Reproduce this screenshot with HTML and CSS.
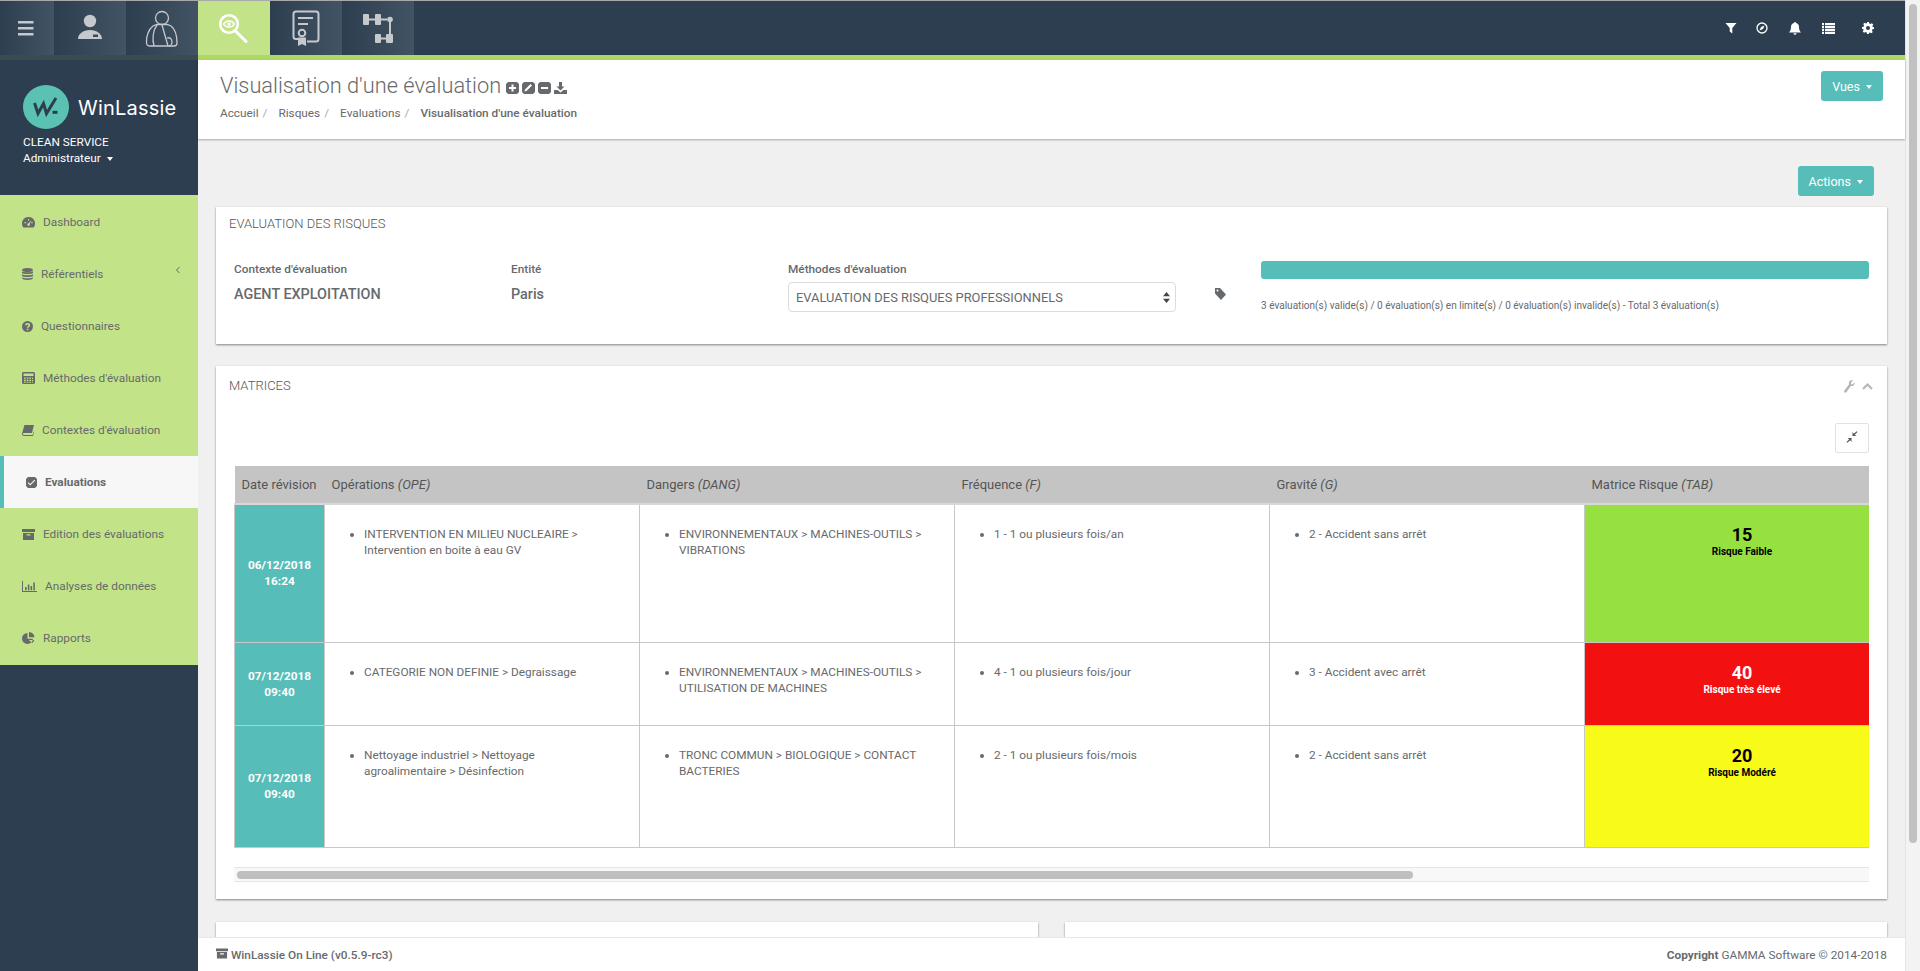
FILE: index.html
```html
<!DOCTYPE html>
<html lang="fr">
  <head>
    <meta charset="UTF-8" />
    <meta name="viewport" content="width=device-width, initial-scale=1.0" />
    <title>WinLassie</title>
    <link rel="stylesheet" href="styles.css">
  </head>
  <body>
    <div class="page">
      <header class="topbar">
        <div class="tabsRow">
          <a class="menuTab">
            <svg width="54" height="54" viewBox="0 0 54 54"><path fill="#c5c9ce" d="M18 20h15.500v2.600H18zM18 26h15.500v2.600H18zM18 32h15.500v2.600H18z"/></svg>
          </a>
          <a class="tab">
            <svg width="72" height="54" viewBox="0 0 72 54"><circle cx="36" cy="20" r="6.200" fill="#c5c9ce"/><path fill="#c5c9ce" fill-rule="evenodd" d="M24 38c0-5 5-9 12-9s12 4 12 9zM39 33.500v2.500h5v-2.500z"/></svg>
          </a>
          <a class="tab">
            <svg width="72" height="54" viewBox="0 0 72 54" fill="none" stroke="#c5c9ce" stroke-width="1.300"><circle cx="36" cy="17" r="6.500"/><path d="M24 45h24c2 0 3-1 3-3 0-7-2-14-6-17-2-1-3-1.500-4-1.500h-10c-1 0-2 .5-4 1.500-4 3-7 10-6.500 16.500 0 2 1.500 3.500 3.500 3.500z"/><path d="M31 24c-4 5-5 14-3 21M36 24l6 21M41 37c3-1 5 1 5 4s-2 4-3 4"/></svg>
          </a>
          <a class="tab active">
            <svg width="72" height="54" viewBox="0 0 72 54" fill="none" stroke="#fff"><circle cx="31" cy="23" r="8.800" stroke-width="2.600"/><path d="M37.500 30L48 40.500" stroke-width="3" stroke-linecap="round"/><path d="M25.500 23c3-4 8-4 11 0-3 4-8 4-11 0z" stroke-width="1.300"/><circle cx="31" cy="23" r="1.700" fill="#fff" stroke="none"/></svg>
          </a>
          <a class="tab">
            <svg width="72" height="54" viewBox="0 0 72 54" fill="none" stroke="#c5c9ce" stroke-width="2"><path d="M28 38h-2c-1.500 0-2.500-1-2.500-2.500V13c0-1.500 1-2.500 2.500-2.500h20c1.500 0 2.500 1 2.500 2.500v25c0 1.500-1 2.500-2.500 2.500h-9"/><path d="M28 17h15M28 23h10"/><circle cx="32" cy="32" r="3.300"/><path fill="#c5c9ce" stroke="none" d="M28 36.500h8V45l-4-2-4 2z"/></svg>
          </a>
          <a class="tab">
            <svg width="72" height="54" viewBox="0 0 72 54" fill="#c5c9ce"><rect x="21" y="13" width="6" height="11" rx="1"/><rect x="33" y="13" width="6" height="11" rx="1"/><path d="M27 17.500h6v2h-6zM39 17.500h6v2h-6zM47 19h2v14h-2z"/><circle cx="48" cy="18.500" r="2.800"/><rect x="33" y="33" width="6" height="9" rx="1"/><rect x="44" y="33" width="7" height="9" rx="1"/><path d="M39 36.500h5v2h-5z"/></svg>
          </a>
          <div class="rightIcons">
            <svg class="filterIco" width="12" height="12" viewBox="0 0 12 12"><path fill="#fff" d="M.5 1h11L7.300 6v5.500L4.700 9.500V6z"/></svg>
            <svg class="compassIco" width="12" height="12" viewBox="0 0 12 12"><circle cx="6" cy="6" r="5" fill="none" stroke="#fff" stroke-width="1.300"/><path fill="#fff" d="M8.600 3.400L7 7 3.400 8.600 5 5z"/></svg>
            <svg class="bellIco" width="12" height="13" viewBox="0 0 12 13"><path fill="#fff" d="M6 0a1 1 0 0 1 1 1c2 .4 3 2 3 4 0 3 .8 4 2 5.500H0C1.200 9 2 8 2 5c0-2 1-3.600 3-4a1 1 0 0 1 1-1zM4.500 11.200h3a1.500 1.500 0 0 1-3 0z"/></svg>
            <svg class="listIco" width="13" height="11" viewBox="0 0 13 11"><path fill="#fff" d="M0 0h2v2.200H0zM3 0h10v2.200H3zM0 3h2v2.200H0zM3 3h10v2.200H3zM0 6h2v2.200H0zM3 6h10v2.200H3zM0 9h2v2H0zM3 9h10v2H3z"/></svg>
            <svg class="gearIco" width="12" height="12" viewBox="0 0 12 12"><path fill="#fff" fill-rule="evenodd" d="M5 0h2l.3 1.600 1.200.5L9.900 1.200l1.400 1.400-.9 1.400.5 1.200L12 5v2l-1.600.3-.5 1.200.9 1.400-1.400 1.400-1.400-.9-1.200.5L7 12H5l-.3-1.600-1.200-.5-1.400.9L.7 9.400l.9-1.400-.5-1.200L0 7V5l1.600-.3.5-1.200-.9-1.400L2.600.7 4 1.600l1.200-.5zM6 4a2 2 0 1 0 0 4 2 2 0 0 0 0-4z"/></svg>
          </div>
        </div>
        <div class="strip"></div>
      </header>

      <div class="pageScroll"><div class="pageThumb"></div></div>

      <aside class="sidebar">
        <div class="profile">
          <div class="logo">
            <svg width="46" height="44" viewBox="0 0 46 44"><ellipse cx="23" cy="22" rx="23" ry="22" fill="#5bc2b3"/><path fill="none" stroke="#2d3e50" stroke-width="3" d="M11.500 18l3.500 10.500 5.500-10 3 10L33 13"/><rect x="29.500" y="25.800" width="5" height="3" fill="#2d3e50"/></svg>
            <span>WinLassie</span>
          </div>
          <div class="company">CLEAN SERVICE</div>
          <div class="role">Administrateur <i class="caret"></i></div>
        </div>
        <nav class="mainNav">
          <a><svg width="13" height="11" viewBox="0 0 13 11"><path fill="#676a6c" fill-rule="evenodd" d="M6.500 0a6.500 6.500 0 0 1 5.600 9.800l-.4.700H1.300l-.4-.7A6.500 6.500 0 0 1 6.500 0zM6 2v1.500h1V2zM2.500 5v1.300h1.400V5zm6.800-2.200L6.700 6.300a1.300 1.300 0 1 0 1 .6zM9.300 5v1.300h1.300V5z"/></svg>Dashboard</a>
          <a><svg width="11" height="12" viewBox="0 0 11 12"><ellipse cx="5.500" cy="2" rx="5.500" ry="2" fill="#676a6c"/><path fill="#676a6c" d="M0 3.200c1.500 1.400 9.500 1.400 11 0V5c-1.500 1.400-9.500 1.400-11 0zM0 6.200c1.500 1.400 9.500 1.400 11 0V8c-1.500 1.400-9.500 1.400-11 0zM0 9.200c1.500 1.400 9.500 1.400 11 0V10c0 2.600-11 2.600-11 0z"/></svg>Référentiels<svg class="navChevron" width="6" height="8" viewBox="0 0 6 8"><path fill="none" stroke="#676a6c" d="M4.500 1L1.500 4l3 3"/></svg></a>
          <a><svg width="11" height="11" viewBox="0 0 11 11"><circle cx="5.500" cy="5.500" r="5.500" fill="#676a6c"/><path fill="none" stroke="#c2e388" stroke-width="1.500" d="M3.800 4.300c0-2.200 3.600-2.200 3.600 0 0 1.300-1.800 1.300-1.800 2.500"/><path fill="#c2e388" d="M4.800 7.700h1.600v1.500H4.800z"/></svg>Questionnaires</a>
          <a><svg width="13" height="12" viewBox="0 0 13 12"><path fill="#676a6c" fill-rule="evenodd" d="M1 0h11l1 1v10l-1 1H1l-1-1V1zM1.500 1.500v2.500h10V1.500zM2 5.500v1.300h1.800V5.500zM4.700 5.500v1.300h1.700V5.500zM7.300 5.500v1.300H9V5.500zM10 5.500v1.300h1V5.500zM2 7.800v1.200h1.800V7.800zM4.700 7.800v1.200h1.700V7.800zM7.300 7.800v1.200H9V7.800zM10 7.800v1.200h1V7.800zM2 9.800v.9h1.800v-.9zM4.700 9.800v.9h1.700v-.9zM7.300 9.800v.9H9v-.9zM10 9.800v.9h1v-.9z"/></svg>Méthodes d'évaluation</a>
          <a><svg width="12" height="11" viewBox="0 0 12 11"><path fill="#676a6c" d="M2.500 0H12l-.3 1L10 8H2c-.6 0-1 .4-1 1s.4 1 1 1h8.600l1-3.500.4.500-1 4H2c-1.200 0-2-.8-2-2 0-.6.200-1.200.3-1.500z"/></svg>Contextes d'évaluation</a>
          <a class="current"><svg width="11" height="11" viewBox="0 0 11 11"><path fill="#676a6c" fill-rule="evenodd" d="M2 0h7l2 2v7l-2 2H2L0 9V2zM2.500 5.200L1.700 6l2.500 2.500 5-5-.8-.8-4.200 4.200z"/></svg>Evaluations</a>
          <a><svg width="13" height="11" viewBox="0 0 13 11"><path fill="#676a6c" fill-rule="evenodd" d="M0 0h13v3H0zM1 4h11v7H1zM4.500 5.300v1.200h4V5.300z"/></svg>Edition des évaluations</a>
          <a><svg width="15" height="11" viewBox="0 0 15 11"><path fill="#676a6c" d="M0 0h1v10h14v1H0zM3 6h1.600v3.300H3zM5.800 3.500h1.600v5.800H5.800zM8.500 5h1.600v4.300H8.500zM11.300 1.500h1.600v7.800h-1.600z"/></svg>Analyses de données</a>
          <a><svg width="13" height="12" viewBox="0 0 13 12"><path fill="#676a6c" d="M5.500 1a5.500 5.500 0 1 0 5.500 5.700H5.500zM7 0v5.200h5.500A5.500 5.500 0 0 0 7 0zM6.800 8h5.400a5.500 5.500 0 0 1-2 3z"/></svg>Rapports</a>
        </nav>
      </aside>

      <main class="mainCol">
        <section class="pageHead">
          <div>
            <h1>Visualisation d'une évaluation
              <span class="titleIcons">
                <svg width="13" height="12" viewBox="0 0 13 12"><path fill="#676a6c" fill-rule="evenodd" d="M2 0h9l2 2v8l-2 2H2L0 10V2zM5.500 2.500V5H3v2h2.500v2.500h2V7H10V5H7.500V2.500z"/></svg>
                <svg width="13" height="12" viewBox="0 0 13 12"><path fill="#676a6c" fill-rule="evenodd" d="M2 0h9l2 2v8l-2 2H2L0 10V2zM8.500 2L3 7.500 2.500 9.500 4.500 9 10 3.500z"/></svg>
                <svg width="13" height="12" viewBox="0 0 13 12"><path fill="#676a6c" fill-rule="evenodd" d="M2 0h9l2 2v8l-2 2H2L0 10V2zM3 5v2h7V5z"/></svg>
                <svg width="13" height="12" viewBox="0 0 13 12"><path fill="#676a6c" d="M5 0h3v4.500h2.500L6.500 8.500l-4-4H5zM0 8h3.500l3 2.500 3-2.500H13v4H0z"/></svg>
              </span>
            </h1>
            <ol class="breadcrumb">
              <li>Accueil</li>
              <li>Risques</li>
              <li>Evaluations</li>
              <li class="here">Visualisation d'une évaluation</li>
            </ol>
          </div>
          <button class="tealBtn">Vues <i class="caret"></i></button>
        </section>

        <div class="content">
          <div class="actionsRow">
            <button class="tealBtn">Actions <i class="caret"></i></button>
          </div>

          <section class="card riskCard">
            <div class="cardTitle">EVALUATION DES RISQUES</div>
            <div class="riskGrid">
              <div>
                <label>Contexte d'évaluation</label>
                <div class="bigValue">AGENT EXPLOITATION</div>
              </div>
              <div>
                <label>Entité</label>
                <div class="bigValue">Paris</div>
              </div>
              <div>
                <label>Méthodes d'évaluation</label>
                <div class="selectBox">
                  <span>EVALUATION DES RISQUES PROFESSIONNELS</span>
                  <svg width="7" height="11" viewBox="0 0 7 11"><path fill="#444" d="M3.500 0L7 4.300H0zM3.500 11L0 6.700h7z"/></svg>
                </div>
              </div>
              <div class="tagCell">
                <svg width="11" height="12" viewBox="0 0 11 12"><path fill="#676a6c" d="M0 0h5l6 6.500L6 12 0 5.500z"/><circle cx="2.500" cy="2.500" r="1" fill="#fff"/></svg>
              </div>
              <div>
                <div class="progress"></div>
                <div class="progressText">3 évaluation(s) valide(s) / 0 évaluation(s) en limite(s) / 0 évaluation(s) invalide(s) - Total 3 évaluation(s)</div>
              </div>
            </div>
          </section>

          <section class="card matrixCard">
            <div class="cardTitle">MATRICES
              <span class="cardTools">
                <svg width="11" height="13" viewBox="0 0 11 13"><path fill="#b5b5b5" d="M10.500 2.500L8.500 4.500 7 4V2.500L9 .5C7.500-.2 5.500.5 5 2c-.2.800-.1 1.500.1 2.200L.4 10.500c-.5.700-.4 1.500.2 2s1.300.3 1.800-.2L6.800 6c1 .2 2 .1 2.800-.6 1-.8 1.300-2 .9-2.900z"/></svg>
                <svg width="11" height="7" viewBox="0 0 11 7"><path fill="none" stroke="#b5b5b5" stroke-width="2" d="M1 6l4.500-4.500L10 6"/></svg>
              </span>
            </div>
            <div class="expandRow">
              <button class="expandBtn">
                <svg width="12" height="12" viewBox="0 0 12 12"><path fill="#555" d="M11.500 1L8.700 3.800 10.500 5H6.500V1l1.300 1.800L10.700.2zM.5 11l2.800-2.800L1.500 7h4v4L4.200 9.200 1.300 11.800z"/></svg>
              </button>
            </div>
            <div class="tableClip">
              <table class="matrix">
                <colgroup>
                  <col class="colDate"><col class="colWide"><col class="colWide"><col class="colWide"><col class="colWide"><col class="colWide"><col class="colRest">
                </colgroup>
                <thead>
                  <tr>
                    <th>Date révision</th>
                    <th>Opérations <em>(OPE)</em></th>
                    <th>Dangers <em>(DANG)</em></th>
                    <th>Fréquence <em>(F)</em></th>
                    <th>Gravité <em>(G)</em></th>
                    <th>Matrice Risque <em>(TAB)</em></th>
                    <th></th>
                  </tr>
                </thead>
                <tbody>
                  <tr class="rowA">
                    <td class="dateCell">06/12/2018<br>16:24</td>
                    <td><ul><li>INTERVENTION EN MILIEU NUCLEAIRE &gt; Intervention en boite à eau GV</li></ul></td>
                    <td><ul><li>ENVIRONNEMENTAUX &gt; MACHINES-OUTILS &gt; VIBRATIONS</li></ul></td>
                    <td><ul><li>1 - 1 ou plusieurs fois/an</li></ul></td>
                    <td><ul><li>2 - Accident sans arrêt</li></ul></td>
                    <td class="riskCell low"><b>15</b><span>Risque Faible</span></td>
                    <td></td>
                  </tr>
                  <tr class="rowB">
                    <td class="dateCell">07/12/2018<br>09:40</td>
                    <td><ul><li>CATEGORIE NON DEFINIE &gt; Degraissage</li></ul></td>
                    <td><ul><li>ENVIRONNEMENTAUX &gt; MACHINES-OUTILS &gt; UTILISATION DE MACHINES</li></ul></td>
                    <td><ul><li>4 - 1 ou plusieurs fois/jour</li></ul></td>
                    <td><ul><li>3 - Accident avec arrêt</li></ul></td>
                    <td class="riskCell high"><b>40</b><span>Risque très élevé</span></td>
                    <td></td>
                  </tr>
                  <tr class="rowC">
                    <td class="dateCell">07/12/2018<br>09:40</td>
                    <td><ul><li>Nettoyage industriel &gt; Nettoyage agroalimentaire &gt; Désinfection</li></ul></td>
                    <td><ul><li>TRONC COMMUN &gt; BIOLOGIQUE &gt; CONTACT BACTERIES</li></ul></td>
                    <td><ul><li>2 - 1 ou plusieurs fois/mois</li></ul></td>
                    <td><ul><li>2 - Accident sans arrêt</li></ul></td>
                    <td class="riskCell mid"><b>20</b><span>Risque Modéré</span></td>
                    <td></td>
                  </tr>
                </tbody>
              </table>
            </div>
            <div class="tableBar"><div class="tableThumb"></div></div>
          </section>

          <div class="lowerCards">
            <section class="card"></section>
            <section class="card"></section>
          </div>
        </div>

        <footer class="footer">
          <div class="footLeft">
            <svg width="12" height="11" viewBox="0 0 13 11"><path fill="#676a6c" fill-rule="evenodd" d="M0 0h13v3H0zM1 4h11v7H1zM4.500 5.300v1.200h4V5.300z"/></svg>
            WinLassie On Line (v0.5.9-rc3)
          </div>
          <div><strong>Copyright</strong> GAMMA Software © 2014-2018</div>
        </footer>
      </main>
    </div>
  </body>
</html>
```

FILE: styles.css
```css
* {
  box-sizing: border-box;
}
html,
body {
  margin: 0;
  height: 100%;
  overflow: hidden;
}
body {
  font-family: Roboto, "Liberation Sans", sans-serif;
  font-size: 11.8px;
  color: #676a6c;
}
.page {
  height: 100vh;
  overflow: hidden;
  display: grid;
  grid-template-columns: 198px 1fr 15px;
  grid-template-rows: 60px 1fr;
  background-color: #f0f0f0;
}

/* top bar */
.topbar {
  grid-column: 1 / 3;
  background-color: #2d3e50;
  border-top: 1px solid #a9a9a9;
}
.tabsRow {
  height: 54px;
  display: flex;
}
.menuTab,
.tab {
  display: block;
  height: 54px;
  background-image: linear-gradient(to right, #2d3e50, #425363);
}
.menuTab {
  width: 54px;
}
.tab {
  width: 72px;
}
.tab.active {
  background-image: none;
  background-color: #c2e388;
}
.rightIcons {
  flex: 1;
  display: flex;
  align-items: center;
  justify-content: flex-end;
  padding-right: 31px;
}
.filterIco {
  margin-right: 19px;
}
.compassIco {
  margin-right: 21px;
}
.bellIco {
  margin-right: 21px;
}
.listIco {
  margin-right: 27px;
}
.strip {
  height: 5px;
  background-image: linear-gradient(to right, #3a4c50 198px, #aed767 198px);
}

/* page scrollbar, drawn */
.pageScroll {
  grid-column: 3;
  grid-row: 1 / 3;
  background-color: #f3f3f3;
  border-left: 1px solid #e4e4e4;
  padding: 4px 3px 0 3px;
}
.pageThumb {
  height: 839px;
  border-radius: 4px;
  background-color: #c1c1c1;
}

/* sidebar */
.sidebar {
  grid-column: 1;
  background-color: #2d3e50;
}
.profile {
  height: 135px;
  padding: 25px 0 0 23px;
  color: #fff;
}
.logo {
  display: flex;
  align-items: center;
  gap: 9px;
  font-family: Inter, "Noto Sans", sans-serif;
  font-size: 20px;
  letter-spacing: 0.2px;
  margin-bottom: 5px;
}
.logo span {
  padding-top: 1px;
}
.company,
.role {
  line-height: 16px;
}
.caret {
  display: inline-block;
  margin-left: 3px;
  vertical-align: middle;
  border-top: 4px solid currentColor;
  border-left: 3.5px solid transparent;
  border-right: 3.5px solid transparent;
}
.mainNav {
  background-color: #c2e388;
  padding: 1px 0;
}
.mainNav a {
  height: 52px;
  display: flex;
  align-items: center;
  gap: 8px;
  padding-left: 22px;
  position: relative;
}
.mainNav a.current {
  background-color: #f7f7f7;
  border-left: 4px solid #57bdb8;
  font-weight: 700;
}
.navChevron {
  position: absolute;
  top: 18px;
  right: 17px;
}

/* main column */
.mainCol {
  grid-column: 2;
  min-width: 0;
  min-height: 0;
  height: 911px;
  display: flex;
  flex-direction: column;
}
.pageHead {
  height: 79px;
  flex: none;
  background-color: #fff;
  box-shadow: 0 1px 2px rgba(0, 0, 0, 0.3);
  padding: 0 22px;
  display: flex;
  justify-content: space-between;
  align-items: flex-start;
  position: relative;
}
.pageHead h1 {
  margin: 12px 0 0;
  font-size: 21.8px;
  line-height: 28px;
  font-weight: 300;
  white-space: nowrap;
}
.titleIcons {
  display: inline-flex;
  gap: 3px;
  margin-left: -1px;
  vertical-align: -1px;
}
.breadcrumb {
  list-style: none;
  margin: 5px 0 0;
  padding: 0;
  display: flex;
  line-height: 16px;
}
.breadcrumb li + li::before {
  content: "/";
  margin: 0 11px 0 4px;
  color: #aaa;
}
.breadcrumb .here {
  font-weight: 500;
}
.breadcrumb .here::before {
  font-weight: 400;
}
.tealBtn {
  height: 30px;
  padding: 0 11px;
  border: 0;
  border-radius: 3px;
  background-color: #57bdb8;
  color: #fff;
  font-family: inherit;
  font-size: 12.5px;
}
.pageHead .tealBtn {
  margin-top: 11px;
}
.content {
  flex: 1;
  min-height: 0;
  overflow: hidden;
  padding: 27px 18px 0;
}
.actionsRow {
  display: flex;
  justify-content: flex-end;
  padding-right: 13px;
  margin-bottom: 11px;
}
.card {
  background-color: #fff;
  box-shadow: 0 1px 2px rgba(0, 0, 0, 0.45);
}
.cardTitle {
  height: 32px;
  padding: 9px 13px 0;
  font-size: 13px;
  line-height: 16px;
  font-weight: 300;
  color: #555;
  position: relative;
}
.riskCard {
  height: 137px;
  margin-bottom: 22px;
}
.riskGrid {
  padding: 22px 18px 0;
  display: grid;
  grid-template-columns: 277px 277px 388px 85px 1fr;
}
.riskGrid label {
  display: block;
  font-weight: 500;
  line-height: 16px;
}
.bigValue {
  margin-top: 8px;
  font-size: 14.4px;
  line-height: 20px;
  font-weight: 500;
}
.selectBox {
  margin-top: 5px;
  height: 30px;
  border: 1px solid #dcdcdc;
  border-radius: 4px;
  padding: 1px 5px 0 7px;
  display: flex;
  align-items: center;
  justify-content: space-between;
  font-size: 12.9px;
}
.tagCell {
  padding: 27px 0 0 39px;
}
.progress {
  height: 18px;
  border-radius: 3px;
  background-color: #57bdb8;
}
.progressText {
  margin-top: 19px;
  font-size: 10.06px;
  line-height: 16px;
}
.matrixCard {
  height: 533px;
  margin-bottom: 23px;
  position: relative;
}
.matrixCard .cardTitle {
  padding-top: 12px;
}
.cardTools {
  position: absolute;
  top: 14px;
  right: 14px;
  display: flex;
  align-items: center;
  gap: 7px;
}
.expandRow {
  display: flex;
  justify-content: flex-end;
  padding: 25px 18px 13px;
}
.expandBtn {
  width: 34px;
  height: 30px;
  padding: 0;
  background-color: #fff;
  border: 1px solid #e2e2e2;
  border-radius: 2px;
}
.tableClip {
  margin: 0 18px 19px;
  overflow: hidden;
}
.tableBar {
  margin: 0 18px;
  height: 15px;
  background-color: #f8f8f8;
  border-top: 1px solid #e6e6e6;
  border-bottom: 1px solid #e6e6e6;
  padding: 3px 0 0 3px;
}
.tableThumb {
  width: 1176px;
  height: 8px;
  border-radius: 4px;
  background-color: #bfbfbf;
}
.matrix {
  width: 2270px;
  table-layout: fixed;
  border-collapse: collapse;
}
.colDate {
  width: 90px;
}
.colWide {
  width: 315px;
}
.matrix th {
  height: 38px;
  background-color: #c4c4c4;
  padding: 0 7px;
  text-align: left;
  font-size: 13px;
  font-weight: 400;
  color: #555;
  white-space: nowrap;
  border-bottom: 2px solid #d8d8d8;
}
.matrix td {
  padding: 0;
  vertical-align: top;
  border: 1px solid #c8c8c8;
  line-height: 16px;
  background-color: #fff;
}
.matrix ul {
  margin: 0;
  padding: 21px 22px 0 39px;
}
.rowA {
  height: 138px;
}
.rowB {
  height: 83px;
}
.rowC {
  height: 122px;
}
.matrix td.dateCell {
  background-color: #57bdb8;
  color: #fff;
  font-weight: 700;
  text-align: center;
  vertical-align: middle;
}
.matrix td.riskCell {
  text-align: center;
  padding-top: 19px;
  font-weight: 700;
}
.riskCell b {
  display: block;
  font-size: 18px;
  line-height: 22px;
  font-weight: 700;
}
.riskCell span {
  display: block;
  font-size: 10px;
  line-height: 12px;
}
.matrix td.low {
  background-color: #96e03f;
  color: #000;
}
.matrix td.high {
  background-color: #f31011;
  color: #fff;
}
.matrix td.mid {
  background-color: #f8fa17;
  color: #000;
}
.lowerCards {
  display: grid;
  grid-template-columns: 822px 822px;
  justify-content: space-between;
}
.lowerCards .card {
  height: 146px;
}
.footer {
  flex: none;
  height: 34px;
  padding: 0 18px;
  background-color: #fff;
  border-top: 1px solid #e7e7e7;
  display: flex;
  align-items: center;
  justify-content: space-between;
}
.footLeft {
  font-weight: 500;
}
.footer strong {
  font-weight: 700;
}
```
